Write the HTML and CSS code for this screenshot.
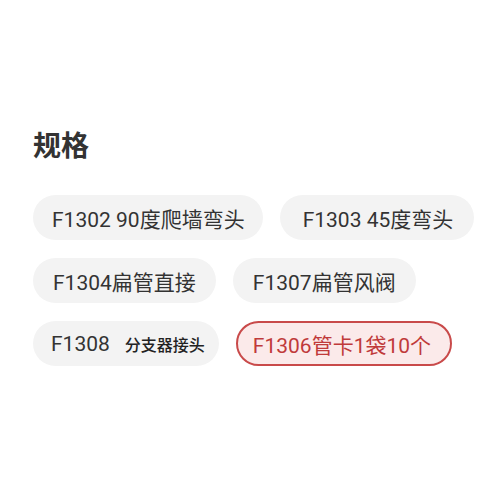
FILE: index.html
```html
<!DOCTYPE html>
<html lang="zh">
<head>
  <meta charset="UTF-8" />
  <meta name="viewport" content="width=device-width, initial-scale=1.0" />
  <title>规格</title>
  <link rel="stylesheet" href="styles.css">
</head>
<body>

<section class="spec">
  <h2 class="spec-title">规格</h2>
  <div class="spec-list">
    <span class="chip chip-wide">F1302 90度爬墙弯头</span>
    <span class="chip chip-mid">F1303 45度弯头</span>
    <span class="chip">F1304扁管直接</span>
    <span class="chip">F1307扁管风阀</span>
    <span class="chip chip-split">F1308<small class="chip-sub">分支器接头</small></span>
    <span class="chip chip-active">F1306管卡1袋10个</span>
  </div>
</section>

</body>
</html>
```

FILE: styles.css
```css
* {
  box-sizing: border-box;
  margin: 0;
  padding: 0;
}

body {
  background: #fff;
  color: #333;
  font-family: Roboto, "Noto Sans CJK SC", sans-serif;
}

.spec {
  padding: 124px 20px 0 33px;
}

.spec-title {
  font-family: "Noto Sans CJK SC", sans-serif;
  font-size: 28px;
  line-height: 40px;
  font-weight: bold;
  color: #333;
  margin-bottom: 31px;
}

.spec-list {
  display: flex;
  flex-wrap: wrap;
  gap: 18px 17px;
}

.chip {
  display: inline-flex;
  align-items: center;
  height: 45px;
  padding: 0 18px;
  border-radius: 23px;
  background-color: #f3f3f3;
  border: 2px solid transparent;
  font-size: 21px;
  color: #333;
  white-space: pre;
}

.chip-wide {
  padding: 0 16px 0 17px;
}

.chip-mid {
  padding: 0 19px 0 21px;
}

.chip-split {
  padding: 0 12px 0 16px;
}

.chip-sub {
  font-family: "Noto Sans CJK SC", sans-serif;
  font-size: 16px;
  font-weight: 500;
  color: #222;
  margin-left: 15px;
}

.chip-active {
  padding: 0 19px 0 15px;
  background-color: #fbeaea;
  border-color: #c94a4a;
  color: #c03a3a;
}
```
